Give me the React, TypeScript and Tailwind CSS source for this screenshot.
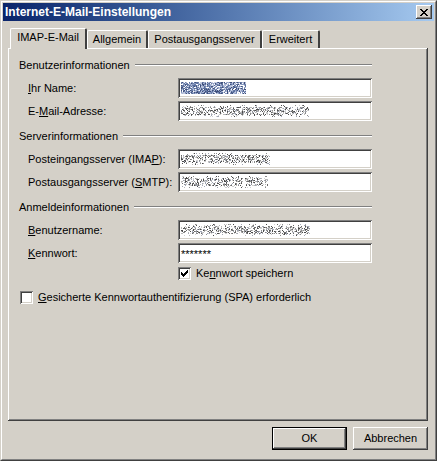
import React from "react";

const raised =
  "shadow-[inset_-1px_-1px_0_#404040,inset_1px_1px_0_#ffffff,inset_-2px_-2px_0_#808080,inset_2px_2px_0_#d4d0c8]";
const sunken =
  "shadow-[inset_1px_1px_0_#808080,inset_-1px_-1px_0_#ffffff,inset_2px_2px_0_#404040,inset_-2px_-2px_0_#d4d0c8]";

// deterministic pixel noise that stands in for the blurred-out values
function Noise({ width, seed, blue }: { width: number; seed: number; blue?: boolean }) {
  let s = seed;
  const rnd = () => {
    s = (s * 1103515245 + 12345) & 0x7fffffff;
    return s / 0x7fffffff;
  };
  const palette = blue
    ? ["#5a6f9c", "#8a9cc4", "#3f4f7a", "#aab6d4", "#6d7fa8", "#c4cce0", "#ffffff"]
    : ["#4a4a4a", "#8c8c8c", "#b8b8b8", "#6a6a6a", "#a0a6b4", "#d0d0d0"];
  const px: React.ReactNode[] = [];
  for (let y = 0; y < 12; y++) {
    for (let x = 0; x < width; x++) {
      const edge = y < 2 || y > 9 ? 0.15 : 0.5;
      if (blue || rnd() < edge) {
        const c = palette[Math.floor(rnd() * palette.length)];
        px.push(<rect key={`${x}-${y}`} x={x} y={y} width={1} height={1} fill={c} />);
      }
    }
  }
  return (
    <svg width={width} height={12} className="block" shapeRendering="crispEdges">
      {px}
    </svg>
  );
}

function Field({ children }: { children?: React.ReactNode }) {
  return (
    <div className={`h-[20px] w-[194px] bg-white ${sunken} flex items-center pl-[3px] pr-[2px]`}>
      {children}
    </div>
  );
}

function Row({ label, field, className = "" }: { label: React.ReactNode; field: React.ReactNode; className?: string }) {
  return (
    <div className={`flex items-center ${className}`}>
      <div className="w-[159px] pl-[9px]">{label}</div>
      {field}
    </div>
  );
}

function Heading({ text, className = "" }: { text: string; className?: string }) {
  return (
    <div className={`flex items-center h-[14px] w-[353px] ${className}`}>
      <span>{text}</span>
      <div className="flex-1 ml-[5px] h-[2px] border-t border-t-[#808080] border-b border-b-white" />
    </div>
  );
}

function Check({ checked }: { checked?: boolean }) {
  return (
    <div className={`w-[13px] h-[13px] bg-white ${sunken} flex items-center justify-center shrink-0`}>
      {checked && (
        <svg width="7" height="7" viewBox="0 0 7 7" shapeRendering="crispEdges">
          <path d="M6 0h1v3h-1v1h-1v1h-1v1h-1v1h-1v-1h-1v-1h-1v-3h1v1h1v1h1v-1h1v-1h1z" fill="#000" />
        </svg>
      )}
    </div>
  );
}

function Tab({ label, width, active }: { label: string; width: string; active?: boolean }) {
  return (
    <div
      className={`${width} flex items-center justify-center rounded-t-[2px] border-l border-l-white border-t border-t-white border-r-2 border-r-[#404040] ${
        active ? "h-[21px] relative z-10 -mb-[1px] bg-[#d4d0c8] pb-[3px]" : "h-[18px]"
      }`}
    >
      {label}
    </div>
  );
}

export default function App() {
  return (
    <div
      className="w-[437px] h-[461px] bg-[#d4d0c8] border border-t-[#d4d0c8] border-l-[#d4d0c8] border-r-[#404040] border-b-[#404040] text-[11px] text-black"
      style={{ fontFamily: '"Liberation Sans", Arial, sans-serif' }}
    >
      <div className="h-full border border-t-white border-l-white border-r-[#808080] border-b-[#808080] p-px flex flex-col">
        {/* Title bar */}
        <div className="h-[18px] bg-gradient-to-r from-[#0a246a] to-[#a6caf0] flex items-center pl-[2px] pr-[2px] shrink-0">
          <span className="flex-1 font-bold text-white text-[12px]">Internet-E-Mail-Einstellungen</span>
          <div className={`w-[16px] h-[14px] bg-[#d4d0c8] ${raised} flex items-center justify-center`}>
            <svg width="8" height="7" viewBox="0 0 8 7" shapeRendering="crispEdges">
              <path
                d="M0 0h2v1h1v1h2v-1h1v-1h2v1h-1v1h-1v1h-1v1h1v1h1v1h1v1h-2v-1h-1v-1h-2v1h-1v1h-2v-1h1v-1h1v-1h1v-1h-1v-1h-1v-1h-1z"
                fill="#000"
              />
            </svg>
          </div>
        </div>

        {/* Dialog body */}
        <div className="flex-1 flex flex-col pl-[5px] pr-[6px] pt-[7px]">
          <div className="flex items-end pl-[2px]">
            <Tab label="IMAP-E-Mail" width="w-[77px]" active />
            <Tab label="Allgemein" width="w-[61px]" />
            <Tab label="Postausgangsserver" width="w-[114px]" />
            <Tab label="Erweitert" width="w-[58px]" />
          </div>

          <div className={`h-[373px] w-[420px] ${raised} pl-[11px] pt-[10px] flex flex-col`}>
            <Heading text="Benutzerinformationen" />
            <Row
              className="mt-[6px]"
              label={<><u>I</u>hr Name:</>}
              field={<Field><Noise width={65} seed={7} blue /></Field>}
            />
            <Row
              className="mt-[3px]"
              label={<>E-<u>M</u>ail-Adresse:</>}
              field={<Field><Noise width={128} seed={19} /></Field>}
            />

            <Heading text="Serverinformationen" className="mt-[8px]" />
            <Row
              className="mt-[6px]"
              label={<>Posteingangsserver (IMA<u>P</u>):</>}
              field={<Field><Noise width={89} seed={31} /></Field>}
            />
            <Row
              className="mt-[3px]"
              label={<>Postausgangsserver (<u>S</u>MTP):</>}
              field={<Field><Noise width={87} seed={47} /></Field>}
            />

            <Heading text="Anmeldeinformationen" className="mt-[8px]" />
            <Row
              className="mt-[6px]"
              label={<><u>B</u>enutzername:</>}
              field={<Field><Noise width={129} seed={59} /></Field>}
            />
            <Row
              className="mt-[3px]"
              label={<><u>K</u>ennwort:</>}
              field={<Field><span className="leading-none pt-[3px]">*******</span></Field>}
            />
            <div className="flex items-center mt-[4px] pl-[159px] h-[13px]">
              <Check checked />
              <span className="ml-[5px]">Ke<u>n</u>nwort speichern</span>
            </div>

            <div className="flex items-center mt-[11px] pl-px h-[13px]">
              <Check />
              <span className="ml-[5px]"><u>G</u>esicherte Kennwortauthentifizierung (SPA) erforderlich</span>
            </div>
          </div>

          <div className="flex justify-end gap-[6px] mt-[6px] w-[420px]">
            <div className="w-[75px] h-[23px] border border-black">
              <div className={`h-full bg-[#d4d0c8] ${raised} flex items-center justify-center`}>OK</div>
            </div>
            <div className={`w-[75px] h-[23px] bg-[#d4d0c8] ${raised} flex items-center justify-center`}>Abbrechen</div>
          </div>
        </div>
      </div>
    </div>
  );
}
